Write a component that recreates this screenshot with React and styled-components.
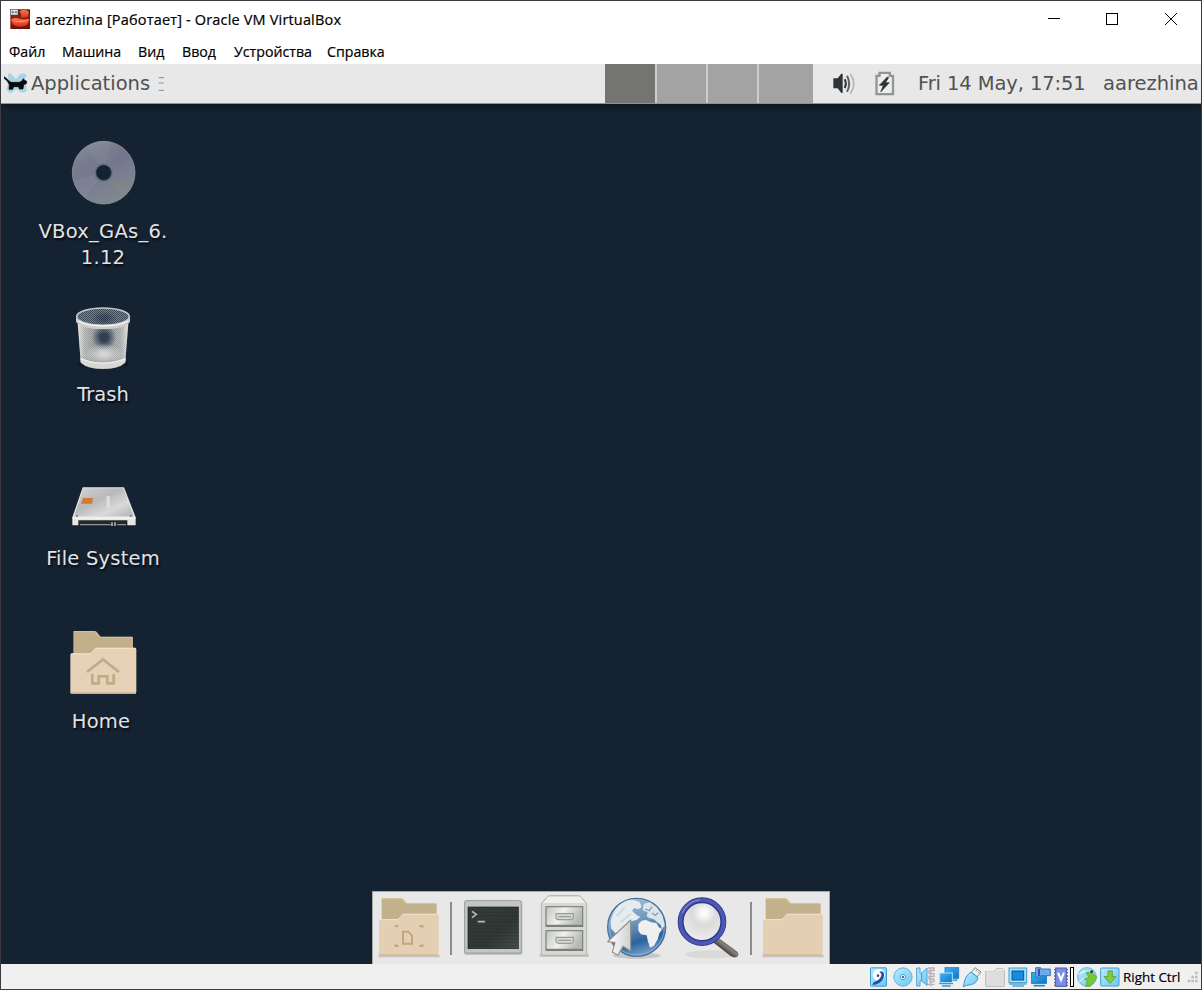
import React from "react";
import styled, { createGlobalStyle } from "styled-components";

const GlobalStyle = createGlobalStyle`
  *, *::before, *::after { box-sizing: border-box; }
  body { margin: 0; overflow: hidden; }
  svg { display: block; flex: none; }
`;

const Window = styled.div`
  width: 1202px;
  height: 990px;
  display: flex;
  flex-direction: column;
  border: 1px solid #3b3a42;
  background: #fff;
  font-family: "Open Sans", "Noto Sans", sans-serif;
  color: #000;
`;

const TitleBar = styled.header`
  flex: none;
  height: 36px;
  display: flex;
  align-items: center;
  padding-left: 9px;
`;

const Title = styled.h1`
  margin: 0 auto 0 5px;
  padding-top: 1px;
  font-size: 14.5px;
  font-weight: 400;
  line-height: 20px;
  letter-spacing: 0.17px;
  white-space: nowrap;
  -webkit-text-stroke: 0.2px #000;
`;

const WindowButton = styled.button`
  width: ${(p) => p.$width || 58}px;
  height: 36px;
  padding: 0;
  border: 0;
  background: none;
  display: flex;
  align-items: center;
  justify-content: center;
`;

const WindowButtons = styled.div`
  display: flex;
`;

const MenuBar = styled.nav`
  flex: none;
  height: 27px;
  display: flex;
  padding: 2px 0 0 8px;
`;

const MenuItem = styled.span`
  width: ${(p) => p.$width}px;
  font-size: 14.2px;
  line-height: 25px;
  white-space: nowrap;
  -webkit-text-stroke: 0.2px #000;
`;

const Guest = styled.main`
  flex: none;
  height: 900px;
  display: flex;
  flex-direction: column;
  background: #152232;
  font-family: "DejaVu Sans", sans-serif;
`;

const Panel = styled.div`
  flex: none;
  height: 40px;
  display: flex;
  align-items: stretch;
  background: #e8e8e8;
  border-bottom: 1px solid #8f9496;
  color: #505252;
  box-shadow: 0 1px 8px rgba(0, 0, 0, 0.6);
  clip-path: inset(0 0 -16px 0);
`;

const AppsButton = styled.div`
  width: 604px;
  display: flex;
  align-items: center;
  gap: 3px;
  padding-left: 3px;
`;

const PanelText = styled.span`
  width: ${(p) => p.$width}px;
  padding-top: ${(p) => p.$drop || 0}px;
  font-size: 19.5px;
  line-height: 38px;
  letter-spacing: ${(p) => p.$spacing || 0}px;
  white-space: nowrap;
`;

const Workspaces = styled.div`
  display: flex;
  gap: 2px;
  background: #cdcdcd;
`;

const Workspace = styled.div`
  width: ${(p) => p.$width}px;
  background: ${(p) => (p.$active ? "#747472" : "#a3a3a3")};
`;

const Tray = styled.div`
  display: flex;
  align-items: center;
  padding: 0 23px 0 20px;
  gap: 18px;
`;

const Desktop = styled.div`
  flex: 1;
  display: flex;
  flex-direction: column;
  justify-content: space-between;
  align-items: center;
  padding-top: 36px;
`;

const Shortcuts = styled.div`
  align-self: flex-start;
  margin-left: 26px;
  display: grid;
  grid-template-rows: 163px 164px 163px 130px;
  width: 152px;
`;

const Shortcut = styled.div`
  display: flex;
  flex-direction: column;
  align-items: center;
`;

const ShortcutLabel = styled.span`
  margin-top: 13px;
  padding-right: ${(p) => p.$shift || 0}px;
  font-size: 19.5px;
  line-height: 26px;
  letter-spacing: ${(p) => p.$spacing || 0}px;
  text-align: center;
  white-space: pre;
  color: #e0e3e6;
  text-shadow: 1px 2px 2px rgba(0, 0, 0, 0.75);
`;

const Dock = styled.div`
  width: 458px;
  height: 73px;
  display: flex;
  background: #e8e8e8;
  border: 1px solid #a3a7aa;
  border-bottom: 0;
`;

const DockDivider = styled.div`
  width: 12px;
  display: flex;
  justify-content: center;
  align-items: flex-start;
  padding-top: 10px;

  &::before {
    content: "";
    width: 2px;
    height: 53px;
    background: #8c8c8c;
  }
`;

const StatusBar = styled.footer`
  flex: 1;
  display: flex;
  align-items: center;
  justify-content: flex-end;
  background: #f0f0f0;
`;

const StatusKey = styled.span`
  width: 65px;
  padding-left: 2px;
  font-size: 13.4px;
  line-height: 24px;
  white-space: nowrap;
  -webkit-text-stroke: 0.2px #000;
`;

function Icon({ box, scale = 3, children }) {
  const [, , w, h] = box.split(" ").map(Number);
  return (
    <svg width={w / scale} height={h / scale} viewBox={box} fill="none">
      {children}
    </svg>
  );
}

const AppIcon = () => (
  <Icon box="30 27 60 60">
    <defs>
      <linearGradient id="app" x1="0" y1="0" x2="0" y2="1">
        <stop offset="0" stopColor="#3d1512" />
        <stop offset="0.4" stopColor="#8a2016" />
        <stop offset="1" stopColor="#6d120b" />
      </linearGradient>
      <linearGradient id="appHat" x1="0" y1="0" x2="0" y2="1">
        <stop offset="0" stopColor="#ff7a4a" />
        <stop offset="1" stopColor="#d92c18" />
      </linearGradient>
    </defs>
    <rect x="31" y="28" width="59" height="59" fill="url(#app)" />
    <path d="M58 33 Q70 27 85 32 Q89 42 82 50 Q72 56 62 52 Q66 44 58 33Z" fill="url(#appHat)" />
    <path d="M34 58 Q46 51 60 57 Q76 60 87 56 Q88 70 76 77 Q54 84 40 74 Q33 68 34 58Z" fill="url(#appHat)" />
    <path d="M37 60 Q60 69 84 58 Q76 67 60 67 Q46 67 37 60Z" fill="#ff9c70" />
    <rect x="31" y="28" width="23" height="17" fill="#f4f4f4" stroke="#555" strokeWidth="2" />
    <path d="M36 34h4v5h-4zM45 33v5h4M49 33v7" stroke="#444" strokeWidth="2" />
  </Icon>
);

const MouseLogo = () => (
  <Icon box="12 216 72 69">
    <path d="M24 222Q34 217 42 232L48 238L56 226Q66 215 78 223Q81 233 70 242Q82 256 80 273Q68 284 57 273L49 267L38 277Q27 283 20 270Q18 258 29 248Q22 236 24 222Z" fill="#a9d5e5" />
    <path d="M12 230Q20 234 27 243L34 247H58L66 243L70 236L73 240L80 244L79 251L71 254L69 267H58L56 260H41L38 268H27L28 254L22 244Q17 238 12 235Z" fill="#060a0e" stroke="#060a0e" strokeWidth="2" strokeLinejoin="round" />
  </Icon>
);

const MenuGrip = () => (
  <Icon box="465 222 30 51">
    <path d="M473 230h16M473 246h15M473 268h16" stroke="#8d8f8f" strokeWidth="3" />
  </Icon>
);

const SpeakerIcon = () => (
  <Icon box="729 36 72 69">
    <path d="M730 55h13l11-14h4v58h-4l-11-14h-13z" fill="#2e3436" />
    <path d="M764 58q7 13 0 26" stroke="#2e3436" strokeWidth="6" />
    <path d="M771 47q13 24 0 48" stroke="#5d6163" strokeWidth="6" />
    <path d="M781 42q21 29 0 59" stroke="#b5b7b7" strokeWidth="5" />
  </Icon>
);

const BatteryIcon = () => (
  <Icon box="855 33 60 75">
    <path d="M859.500 47.500h9v-9h31v9h9.500v55h-49.500z" fill="#ededed" stroke="#929595" strokeWidth="7" />
    <path d="M892 51l-24 25h12l-8 20 26-28h-12l10-15z" fill="#2e3436" stroke="#2e3436" strokeWidth="2" />
  </Icon>
);

const DiscIcon = () => (
  <Icon box="111 30 216 198">
    <defs>
      <linearGradient id="disc" x1="0.2" y1="0" x2="0.7" y2="1">
        <stop offset="0" stopColor="#858b96" />
        <stop offset="0.3" stopColor="#767a8b" />
        <stop offset="0.55" stopColor="#777b91" />
        <stop offset="1" stopColor="#818a8f" />
      </linearGradient>
    </defs>
    <circle cx="221" cy="128" r="94" fill="url(#disc)" stroke="#8e959c" strokeWidth="2.500" />
    <path d="M221 128L170 49A94 94 0 0 1 245 37Z" fill="#99a0a8" opacity="0.15" />
    <path d="M221 128L265 187A74 74 0 0 0 282 164Z" fill="#858d70" opacity="0.35" />
    <path d="M221 128L132 150A94 94 0 0 0 165 203Z" fill="#9fa5ae" opacity="0.15" />
    <path d="M221 128L304 84A94 94 0 0 0 275 52Z" fill="#5f6285" opacity="0.15" />
    <circle cx="221" cy="128" r="31" fill="#70768a" stroke="#7d8696" strokeWidth="2" />
    <circle cx="221" cy="128" r="23" fill="#152232" stroke="#3c4757" strokeWidth="2" />
  </Icon>
);

const TrashIcon = () => (
  <Icon box="111 24 216 198">
    <defs>
      <linearGradient id="bin" x1="0" x2="1">
        <stop offset="0" stopColor="#e4e4e2" />
        <stop offset="0.14" stopColor="#a9abab" />
        <stop offset="0.35" stopColor="#85898b" />
        <stop offset="0.65" stopColor="#85898b" />
        <stop offset="0.87" stopColor="#a9abaa" />
        <stop offset="1" stopColor="#e4e4e2" />
      </linearGradient>
      <radialGradient id="binDark">
        <stop offset="0.3" stopColor="#1d2e45" stopOpacity="0.85" />
        <stop offset="1" stopColor="#1d2e45" stopOpacity="0" />
      </radialGradient>
      <radialGradient id="binLight">
        <stop offset="0.2" stopColor="#dededc" stopOpacity="0.85" />
        <stop offset="1" stopColor="#dededc" stopOpacity="0" />
      </radialGradient>
      <pattern id="mesh" width="6" height="6" patternUnits="userSpaceOnUse">
        <path d="M0 0h3v3h-3zM3 3h3v3h-3z" fill="#d9dbdb" opacity="0.4" />
      </pattern>
    </defs>
    <ellipse cx="219" cy="205" rx="78" ry="16" fill="#0a121d" opacity="0.5" />
    <path d="M143 85L152 200Q172 220 219 220Q266 220 286 200L295 85Z" fill="url(#bin)" />
    <path d="M143 85L152 200Q172 220 219 220Q266 220 286 200L295 85Z" fill="url(#mesh)" />
    <ellipse cx="222" cy="127" rx="36" ry="38" fill="url(#binDark)" />
    <ellipse cx="222" cy="178" rx="60" ry="32" fill="url(#binLight)" />
    <path d="M151 188Q219 217 287 188L286 203Q266 222 219 222Q172 222 152 203Z" fill="#dededc" opacity="0.9" />
    <path d="M152 192Q219 218 286 192" stroke="#f4f4f2" strokeWidth="3" />
    <ellipse cx="219" cy="66" rx="80" ry="27" fill="#3c4855" />
    <ellipse cx="219" cy="66" rx="80" ry="27" fill="url(#mesh)" />
    <ellipse cx="222" cy="70" rx="38" ry="22" fill="url(#binDark)" opacity="0.6" />
    <ellipse cx="219" cy="65" rx="79" ry="26" stroke="#c9c9c7" strokeWidth="5" />
    <path d="M138 67Q150 90 219 90Q288 90 300 67V80Q285 102 219 102Q153 102 138 80Z" fill="#cfcecb" />
    <path d="M145 78Q170 93 219 93Q268 93 294 78" stroke="#f6f6f4" strokeWidth="4" />
  </Icon>
);

const DriveIcon = () => (
  <Icon box="111 -9 216 198">
    <defs>
      <linearGradient id="drive" x1="0" y1="0" x2="1" y2="1">
        <stop offset="0" stopColor="#d4d4d4" />
        <stop offset="0.4" stopColor="#b9b9bb" />
        <stop offset="0.7" stopColor="#d9d9d9" />
        <stop offset="1" stopColor="#b0b0b0" />
      </linearGradient>
    </defs>
    <path d="M158 52H282L317 142V166H127V142Z" fill="#e6e6e2" />
    <path d="M160 55H280L311 139H132Z" fill="url(#drive)" />
    <path d="M128 145H316" stroke="#f5f5f0" strokeWidth="4" />
    <path d="M145 151H292V168H145Z" fill="#25282b" />
    <path d="M150 164H242M262 164H288" stroke="#a9aaa8" strokeWidth="3" />
    <path d="M246 157V168M255 157V168" stroke="#cfcfcc" strokeWidth="4" />
    <path d="M159 84H189L186 101H153Z" fill="#d07a38" />
    <path d="M230 78h9v35h-9z" fill="#e6e6e6" opacity="0.8" />
    <circle cx="141" cy="138" r="3" fill="#777" />
    <circle cx="302" cy="138" r="3" fill="#777" />
  </Icon>
);

const HomeIcon = () => (
  <Icon box="111 30 216 198">
    <path d="M130 37Q130 33 134 33H194Q198 33 201 37L212 50H306Q309 50 309 54V120H130Z" fill="#c3b08a" />
    <path d="M131 35H195L210 52H307" stroke="#d5c7a5" strokeWidth="2.500" />
    <path d="M121 105Q121 100 126 100H180Q184 99 187 95L193 87Q196 83 201 83H314Q319 83 319 88V216Q319 221 314 221H126Q121 221 121 216Z" fill="#e5d1b5" />
    <path d="M123 102H181L197 85H317" stroke="#f3e4ca" strokeWidth="3" />
    <path d="M122 219H318" stroke="#cdb58f" strokeWidth="4" />
    <path d="M171 156L219 118L267 156M187 162V190H206V169H232V190H251V162" stroke="#c2aa86" strokeWidth="8" />
  </Icon>
);

const FolderShape = () => (
  <>
    <path d="M40 211H224V217H40Z" fill="#8a7c66" opacity="0.35" />
    <path d="M50 43Q50 39 54 39H108Q112 39 115 43L125 54H211Q215 54 215 58V120H50Z" fill="#c2b18b" />
    <path d="M51 41H110L124 56H214" stroke="#d8caa9" strokeWidth="2.500" />
    <path d="M42 107Q42 102 47 102H97Q101 102 104 98L111 90Q114 86 119 86H216Q221 86 221 91V207Q221 212 216 212H47Q42 212 42 207Z" fill="#e4cfb2" />
    <path d="M44 104H98L114 88H219" stroke="#f2e3c9" strokeWidth="3" />
    <path d="M43 210H220" stroke="#c9ad86" strokeWidth="3" />
  </>
);

const DesktopFolderIcon = () => (
  <Icon box="24 21 216 216">
    <FolderShape />
    <path d="M92 127v-4h8M163 123h9v5M92 178v5h8M163 183h9v-5M114 140h16l11 12v24h-27z" stroke="#bfa582" strokeWidth="6" />
  </Icon>
);

const FolderIcon = () => (
  <Icon box="24 21 216 216">
    <FolderShape />
  </Icon>
);

const TerminalIcon = () => (
  <Icon box="276 21 216 216">
    <defs>
      <linearGradient id="term" x1="0" y1="0" x2="1" y2="1">
        <stop offset="0" stopColor="#353b39" />
        <stop offset="0.6" stopColor="#303735" />
        <stop offset="1" stopColor="#454f4b" />
      </linearGradient>
    </defs>
    <rect x="297" y="48" width="175" height="161" rx="6" fill="#8e908e" opacity="0.55" />
    <rect x="299" y="47" width="170" height="157" rx="5" fill="#c4c6c4" stroke="#9b9e9c" strokeWidth="3" />
    <rect x="309" y="66" width="151" height="125" fill="url(#term)" stroke="#1c2120" strokeWidth="2" />
    <path d="M310 82h149M310 92h149M310 102h149M310 112h149M310 122h149M310 132h149M310 142h149M310 152h149M310 162h149M310 172h149M310 182h149" stroke="#232a28" strokeWidth="2" opacity="0.5" />
    <path d="M321 79L334 88L321 98M338 110H360" stroke="#b4b9b6" strokeWidth="5" />
  </Icon>
);

const CabinetIcon = () => (
  <Icon box="492 21 216 216">
    <defs>
      <linearGradient id="cab" x1="0" x2="1" y2="0.3">
        <stop offset="0" stopColor="#bfc2bd" />
        <stop offset="0.5" stopColor="#f1f1ee" />
        <stop offset="1" stopColor="#b5b8b3" />
      </linearGradient>
    </defs>
    <path d="M524 206H672V216H524Z" fill="#777" opacity="0.3" />
    <path d="M529 57Q530 52 534 49L549 34Q552 32 557 32H639Q644 32 647 35L661 50Q665 54 665 59V206Q665 211 660 211H534Q529 211 529 206Z" fill="#d6d8d3" stroke="#b0b3ad" strokeWidth="3" />
    <path d="M550 35H644L660 54H534Z" fill="#f0f0ee" />
    <g stroke="#7c807a" strokeWidth="3.500">
      <rect x="543" y="65" width="110" height="56" fill="url(#cab)" />
      <rect x="543" y="137" width="110" height="56" fill="url(#cab)" />
    </g>
    <path d="M542 124H655M542 196H655" stroke="#666a64" strokeWidth="3" />
    <g fill="#d8dad6" stroke="#999c97" strokeWidth="3.500">
      <path d="M573 86H625V97Q623 104 616 104H582Q574 104 573 97Z" />
      <path d="M573 157H625V168Q623 175 616 175H582Q574 175 573 168Z" />
      <path d="M580 95H619M580 166H619" />
    </g>
  </Icon>
);

const BrowserIcon = () => (
  <Icon box="18 21 216 216">
    <defs>
      <linearGradient id="globe" x1="0.3" y1="0" x2="0.6" y2="1">
        <stop offset="0" stopColor="#a6bed3" />
        <stop offset="0.45" stopColor="#6a93bd" />
        <stop offset="0.75" stopColor="#2c639f" />
        <stop offset="1" stopColor="#7aa6cc" />
      </linearGradient>
      <linearGradient id="pointer" x1="0" x2="1">
        <stop offset="0" stopColor="#fff" />
        <stop offset="1" stopColor="#cfd1cf" />
      </linearGradient>
    </defs>
    <ellipse cx="125" cy="212" rx="72" ry="9" fill="#777" opacity="0.3" />
    <circle cx="125" cy="127" r="87" fill="url(#globe)" stroke="#44709d" strokeWidth="4" />
    <circle cx="125" cy="127" r="83" stroke="#a9c3da" strokeWidth="2.500" opacity="0.8" />
    <path d="M47 112Q50 84 72 61Q91 44 112 44L134 51L140 66L129 73L118 68L111 77L126 91L136 95L126 104L109 109L101 121L81 134L61 145L48 130Z" fill="#e6ecee" />
    <path d="M146 56L165 52L185 67L202 91L209 120L201 134L197 119L186 111L177 103L162 99L155 94L158 82L143 76Z" fill="#dde5e8" />
    <path d="M130 118Q137 105 153 105L168 112L184 114L191 126L201 133L193 145L188 163L177 182L165 188L158 166L155 151L138 148L130 137Z" fill="#f0f1ee" />
    <path d="M150 72L163 77L171 65M171 84L181 91L190 83" stroke="#7fa2c3" strokeWidth="4" />
    <path d="M65 93L89 68M77 112L108 86" stroke="#c9d7e1" strokeWidth="5" />
    <path d="M107 105L38 170L60 173L52 202L69 211L84 184L107 198Z" fill="url(#pointer)" stroke="#8d908e" strokeWidth="3.500" strokeLinejoin="round" />
  </Icon>
);

const SearchIcon = () => (
  <Icon box="234 21 216 216">
    <defs>
      <radialGradient id="lens" cx="0.55" cy="0.3" r="0.7">
        <stop offset="0" stopColor="#fff" />
        <stop offset="0.15" stopColor="#f4f4f4" />
        <stop offset="0.4" stopColor="#dadada" />
        <stop offset="1" stopColor="#efefef" />
      </radialGradient>
      <linearGradient id="handle" x1="0" y1="1" x2="1" y2="0">
        <stop offset="0.35" stopColor="#37322f" />
        <stop offset="0.55" stopColor="#8b837b" />
        <stop offset="0.7" stopColor="#4c4540" />
      </linearGradient>
    </defs>
    <ellipse cx="350" cy="208" rx="80" ry="12" fill="#888" opacity="0.15" />
    <path d="M354 172L370 159Q379 164 388 172L427 200Q434 209 427 215Q419 220 408 214Z" fill="url(#handle)" />
    <circle cx="321" cy="110" r="64" fill="url(#lens)" stroke="#30388d" strokeWidth="18" />
    <circle cx="321" cy="110" r="65" stroke="#4d57b4" strokeWidth="11" />
    <path d="M262 84Q276 50 314 44" stroke="#7c87d0" strokeWidth="4" />
  </Icon>
);

const BlueGradients = () => (
  <svg width="0" height="0">
    <defs>
      <linearGradient id="sky" x1="0" y1="0" x2="1" y2="1">
        <stop offset="0" stopColor="#b8ebff" />
        <stop offset="1" stopColor="#6fc6f2" />
      </linearGradient>
      <linearGradient id="azure" x1="0" y1="0" x2="1" y2="1">
        <stop offset="0" stopColor="#3fb4f5" />
        <stop offset="1" stopColor="#0878d0" />
      </linearGradient>
    </defs>
  </svg>
);

const StatusIcons = () => (
  <>
    <Icon box="24 36 69 60">
      <rect x="31.500" y="38.500" width="48" height="55" rx="2" fill="url(#sky)" stroke="#379bd8" strokeWidth="3" />
      <circle cx="57" cy="60" r="18" fill="#fff" />
      <path d="M58 52q10 3 4 14q-6 11-21 16l-4 8q16 0 28-12q12-15 5-26q-5-6-12 0z" fill="#2a4da6" />
      <circle cx="54" cy="62" r="4" fill="#2452a8" />
    </Icon>
    <Icon box="93 36 69 60">
      <circle cx="129" cy="66" r="27.500" fill="url(#sky)" stroke="#5fb3dd" strokeWidth="3" />
      <circle cx="129" cy="66" r="8" fill="#d9f4ff" stroke="#4ba7d8" strokeWidth="3" />
      <circle cx="129" cy="66" r="3" fill="#338" />
    </Icon>
    <Icon box="162 36 69 60">
      <path d="M203 39h19v8h-15v9h15v8h-15v8h15v8h-15M198 88h25" stroke="#b0b0b0" strokeWidth="4" />
      <path d="M212 39V94" stroke="#bababa" strokeWidth="5" />
      <path d="M170 39h10v15h5L201 39V91L185 78h-5v15h-10z" fill="url(#sky)" stroke="#4ba5d4" strokeWidth="3" />
      <path d="M185 54v24" stroke="#3b99cb" strokeWidth="3" />
    </Icon>
    <Icon box="231 36 72 60">
      <rect x="255" y="38" width="41" height="32" fill="url(#azure)" stroke="#3483b8" strokeWidth="3" />
      <path d="M270 73h22v5h-22z" fill="#4b9dcc" />
      <rect x="239" y="54" width="38" height="29" fill="url(#azure)" stroke="#b7e4fb" strokeWidth="3" />
      <path d="M237 86h42M246 93h26" stroke="#4195c8" strokeWidth="4" />
    </Icon>
    <Icon box="303 36 69 60">
      <path d="M345 38l18 13-11 14-18-13z" fill="#f4f4f4" stroke="#8b8b8b" strokeWidth="3" />
      <path d="M347 45l3 3M354 50l3 3" stroke="#555" strokeWidth="3" />
      <path d="M333 51l21 17q-4 18-22 21l-14 3-8 3 2-9q3-23 21-35z" fill="url(#sky)" stroke="#389bd0" strokeWidth="3" />
    </Icon>
    <Icon box="372 36 69 60">
      <path d="M377 50h27l6-10h18l5 6v46q0 3-3 3h-50q-3 0-3-3z" fill="#dededd" stroke="#bbb" strokeWidth="3" />
      <path d="M379 51h27l5-7h20" stroke="#f5f5f5" strokeWidth="2" />
    </Icon>
    <Icon box="441 36 69 60">
      <rect x="447" y="39" width="53" height="44" fill="#a8e1fb" stroke="#3e9bce" strokeWidth="3" />
      <rect x="456" y="48" width="35" height="27" fill="#168be0" stroke="#075794" strokeWidth="3" />
      <path d="M448 87h51M457 93h35" stroke="#54a7d3" strokeWidth="4" />
    </Icon>
    <Icon box="0 36 66 60">
      <rect x="5" y="53" width="44" height="32" fill="url(#azure)" stroke="#2875b1" strokeWidth="3" />
      <path d="M11 92h34" stroke="#2685c4" strokeWidth="5" />
      <path d="M17 38h15v4h29v20H32v4H17z" fill="#6caceb" stroke="#4471b5" strokeWidth="3" />
      <path d="M27 41v22" stroke="#343cad" strokeWidth="5" />
    </Icon>
    <Icon box="66 36 51 60">
      <path d="M72 44h42M72 53h42M72 63h42M72 73h42M72 83h42M72 91h42" stroke="#6467a8" strokeWidth="4" />
      <rect x="77" y="39" width="32" height="55" fill="#7e8ee0" stroke="#4f57aa" strokeWidth="3" />
      <path d="M84 53l9 22 9-22" stroke="#fff" strokeWidth="6" />
    </Icon>
    <Icon box="117 36 18 60">
      <rect x="121.500" y="37.500" width="9" height="57" fill="#fff" stroke="#000" strokeWidth="3" />
    </Icon>
    <Icon box="135 36 72 60">
      <circle cx="171" cy="66" r="28" fill="url(#sky)" stroke="#61b4d5" strokeWidth="3" />
      <path d="M145 57q17-12 35-6M147 80q14-13 30-14" stroke="#fff" strokeWidth="3" opacity="0.8" />
      <path d="M168 52h15l18 15-20 27h-14l5-16-9-7 14-4z" fill="#75c836" stroke="#5fae2a" strokeWidth="2.500" />
      <circle cx="185" cy="50" r="4" fill="#173a4c" />
    </Icon>
    <Icon box="207 36 66 60">
      <rect x="212" y="39" width="55" height="54" rx="3" fill="url(#sky)" stroke="#449ed0" strokeWidth="3" />
      <path d="M234 48h13v17h11l-18 20-18-20h12z" fill="#83cd39" stroke="#4f9b27" strokeWidth="2.500" />
    </Icon>
  </>
);

const SizeGrip = () => (
  <Icon box="470 54 45 48">
    <path d="M497 62h8v8h-8zM486 74h8v8h-8zM497 74h8v8h-8zM475 86h8v8h-8zM486 86h8v8h-8zM497 86h8v8h-8z" fill="#bdbdbd" />
  </Icon>
);

const menus = [
  ["Файл", 53],
  ["Машина", 76],
  ["Вид", 44],
  ["Ввод", 52],
  ["Устройства", 93],
  ["Справка", 70],
];

const shortcuts = [
  { name: "VBox_GAs_6.\n1.12", picture: DiscIcon, spacing: 0.25 },
  { name: "Trash", picture: TrashIcon },
  { name: "File System", picture: DriveIcon, spacing: 0.2 },
  { name: "Home", picture: HomeIcon, shift: 4, spacing: 0.2 },
];

export default function App() {
  return (
    <Window>
      <GlobalStyle />
      <TitleBar>
        <AppIcon />
        <Title>aarezhina [Работает] - Oracle VM VirtualBox</Title>
        <WindowButtons>
          <WindowButton aria-label="Minimize">
            <svg width="12" height="12"><path d="M0 5.500h12" stroke="#000" /></svg>
          </WindowButton>
          <WindowButton aria-label="Maximize">
            <svg width="12" height="12"><rect x="0.500" y="0.500" width="11" height="11" fill="none" stroke="#000" /></svg>
          </WindowButton>
          <WindowButton aria-label="Close" $width={60}>
            <svg width="12" height="12"><path d="M0 0l12 12M12 0L0 12" stroke="#000" /></svg>
          </WindowButton>
        </WindowButtons>
      </TitleBar>
      <MenuBar>
        {menus.map(([name, width]) => (
          <MenuItem key={name} $width={width}>{name}</MenuItem>
        ))}
      </MenuBar>
      <Guest>
        <Panel>
          <AppsButton>
            <MouseLogo />
            <PanelText $width={122}>Applications</PanelText>
            <MenuGrip />
          </AppsButton>
          <Workspaces>
            <Workspace $width={50} $active />
            <Workspace $width={49} />
            <Workspace $width={49} />
            <Workspace $width={54} />
          </Workspaces>
          <Tray>
            <SpeakerIcon />
            <BatteryIcon />
          </Tray>
          <PanelText $width={185} $drop={1} $spacing={-0.1}>Fri 14 May, 17:51</PanelText>
          <PanelText $width={97} $drop={1}>aarezhina</PanelText>
        </Panel>
        <Desktop>
          <Shortcuts>
            {shortcuts.map(({ name, picture: Picture, shift, spacing }) => (
              <Shortcut key={name}>
                <Picture />
                <ShortcutLabel $shift={shift} $spacing={spacing}>{name}</ShortcutLabel>
              </Shortcut>
            ))}
          </Shortcuts>
          <Dock>
            <DesktopFolderIcon />
            <DockDivider />
            <TerminalIcon />
            <CabinetIcon />
            <BrowserIcon />
            <SearchIcon />
            <DockDivider />
            <FolderIcon />
          </Dock>
        </Desktop>
      </Guest>
      <StatusBar>
        <BlueGradients />
        <StatusIcons />
        <StatusKey>Right Ctrl</StatusKey>
        <SizeGrip />
      </StatusBar>
    </Window>
  );
}
